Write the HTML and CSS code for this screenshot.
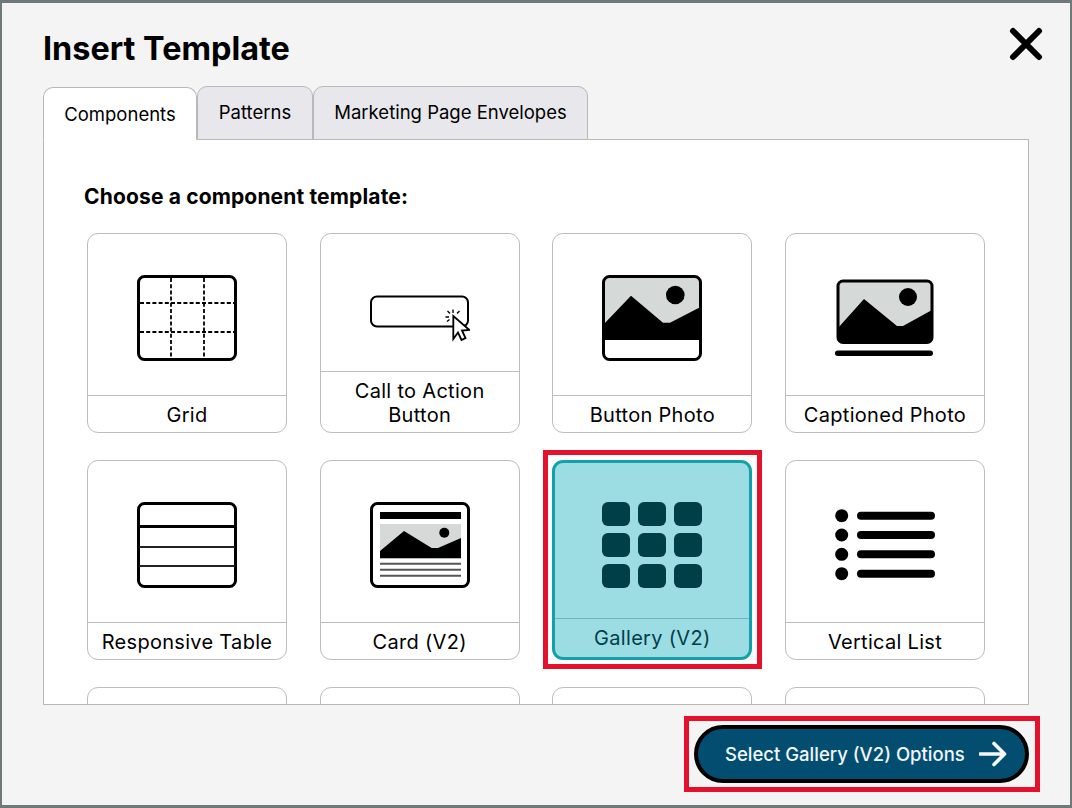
FILE: index.html
```html
<!DOCTYPE html>
<html lang="en">
<head>
<meta charset="utf-8">
<title>Insert Template</title>
<link rel="stylesheet" href="styles.css">
</head>
<body>
<div class="window">
  <header class="head">
    <h1 class="title">Insert Template</h1>
    <button class="close" aria-label="Close">
      <svg width="34" height="34" viewBox="0 0 34 34"><path d="M4 4 30 30M30 4 4 30" class="close-x"/></svg>
    </button>
  </header>
  <nav class="tabs">
    <div class="tab tab-active">Components</div>
    <div class="tab">Patterns</div>
    <div class="tab">Marketing Page Envelopes</div>
  </nav>
  <main class="panel">
    <h2 class="prompt">Choose a component template:</h2>
    <div class="grid">
      <div class="card">
        <svg class="icon" viewBox="0 0 100 86">
          <rect class="frame" x="1.5" y="1.5" width="97" height="83" rx="6"/>
          <path class="dash" d="M34 3V83M67 3V83M3 28H97M3 57H97"/>
        </svg>
        <div class="cap">Grid</div>
      </div>
      <div class="card">
        <svg class="icon" viewBox="0 0 100 86">
          <rect class="thin" x="1" y="21.5" width="97" height="30" rx="6"/>
          <path class="cursor" d="M83.3 41 83.3 64 88 57.5 91.5 65 95.5 63 92 55.5 99.5 55Z"/>
          <path class="rays" d="M83 38V34.5M80 38.5 77.5 36M79 42H75.5M87 38.5 89.5 36M79.5 44.5 77 46.5"/>
        </svg>
        <div class="cap">Call to Action Button</div>
      </div>
      <div class="card">
        <svg class="icon" viewBox="0 0 100 86">
          <rect class="sky" x="2" y="2" width="96" height="63"/>
          <path d="M1 50 29 20.7 61 47.7H68L99 31.7V65H1Z"/>
          <circle cx="73.3" cy="20" r="9.3"/>
          <rect class="frame" x="1.5" y="1.5" width="97" height="83" rx="6"/>
        </svg>
        <div class="cap">Button Photo</div>
      </div>
      <div class="card">
        <svg class="icon" viewBox="0 0 100 86">
          <rect class="sky" x="3" y="6" width="94" height="61" rx="5"/>
          <path d="M3 53 29 24 62 51H68L97 35V62Q97 67 92 67H8Q3 67 3 62Z"/>
          <circle cx="73" cy="22" r="9"/>
          <rect class="frame" x="3" y="6" width="94" height="61.5" rx="5"/>
          <rect x="0" y="75.5" width="98" height="5.5" rx="2.7"/>
        </svg>
        <div class="cap">Captioned Photo</div>
      </div>
      <div class="card">
        <svg class="icon" viewBox="0 0 100 86">
          <rect class="frame" x="1.5" y="1.5" width="97" height="83" rx="6"/>
          <path class="row-thick" d="M2 24.5H98"/>
          <path class="row-thin" d="M2 45H98M2 64H98"/>
        </svg>
        <div class="cap">Responsive Table</div>
      </div>
      <div class="card">
        <svg class="icon" viewBox="0 0 100 86">
          <rect class="frame" x="1.5" y="1.5" width="97" height="83" rx="6"/>
          <rect x="10" y="10" width="81" height="7"/>
          <rect class="sky" x="10" y="22" width="81" height="34.3"/>
          <path d="M10 49 34 29 61.7 46H68L91 36V56.3H10Z"/>
          <circle cx="74.3" cy="30.7" r="5"/>
          <path class="text-lines" d="M10 61.7H91M10 67.7H91M10 73.7H91"/>
        </svg>
        <div class="cap">Card (V2)</div>
      </div>
      <div class="card card-selected">
        <svg class="icon" viewBox="0 0 100 86">
          <rect class="tile" x="0" y="0" width="28" height="24" rx="6"/>
          <rect class="tile" x="36" y="0" width="28" height="24" rx="6"/>
          <rect class="tile" x="72" y="0" width="28" height="24" rx="6"/>
          <rect class="tile" x="0" y="31" width="28" height="24" rx="6"/>
          <rect class="tile" x="36" y="31" width="28" height="24" rx="6"/>
          <rect class="tile" x="72" y="31" width="28" height="24" rx="6"/>
          <rect class="tile" x="0" y="62" width="28" height="24" rx="6"/>
          <rect class="tile" x="36" y="62" width="28" height="24" rx="6"/>
          <rect class="tile" x="72" y="62" width="28" height="24" rx="6"/>
        </svg>
        <div class="cap">Gallery (V2)</div>
      </div>
      <div class="card">
        <svg class="icon" viewBox="0 0 100 86">
          <circle cx="6.7" cy="13.7" r="6.5"/>
          <circle cx="6.7" cy="33" r="6.5"/>
          <circle cx="6.7" cy="52.3" r="6.5"/>
          <circle cx="6.7" cy="71.7" r="6.5"/>
          <rect x="22" y="9.7" width="78" height="8" rx="4"/>
          <rect x="22" y="29" width="78" height="8" rx="4"/>
          <rect x="22" y="48.3" width="78" height="8" rx="4"/>
          <rect x="22" y="67.7" width="78" height="8" rx="4"/>
        </svg>
        <div class="cap">Vertical List</div>
      </div>
      <div class="card"></div>
      <div class="card"></div>
      <div class="card"></div>
      <div class="card"></div>
    </div>
  </main>
  <footer class="foot">
    <button class="next">
      <span>Select Gallery (V2) Options</span>
      <svg class="arrow" width="28" height="26" viewBox="0 0 28 26"><path d="M1 13H25M15 2.5 25.5 13 15 23.5"/></svg>
    </button>
  </footer>
</div>
</body>
</html>
```

FILE: styles.css
```css
* { box-sizing: border-box; }
html, body { margin: 0; padding: 0; }
body { font-family: Inter, "Liberation Sans", sans-serif; color: #000; overflow: hidden; }

.window {
  width: 1072px;
  height: 808px;
  background: #f4f4f5;
  border-style: solid;
  border-color: #6e7a7a;
  border-width: 3px 2px 3px 2px;
  padding: 0 41px;
  display: flex;
  flex-direction: column;
}

.head {
  height: 83px;
  display: flex;
  justify-content: space-between;
  align-items: flex-start;
}
.title {
  margin: 25px 0 0;
  font-size: 32.4px;
  line-height: 42px;
  font-weight: 700;
}
.close {
  margin: 24px -14px 0 0;
  padding: 0;
  width: 34px;
  height: 34px;
  border: 0;
  background: none;
}
.close-x { stroke: #000; stroke-width: 6px; stroke-linecap: round; fill: none; }

.tabs { display: flex; height: 54px; align-items: flex-end; position: relative; z-index: 1; margin-bottom: -1px; }
.tab {
  height: 54px;
  border: 1px solid #b8b8b8;
  border-radius: 10px 10px 0 0;
  background: #e8e8ec;
  font-size: 18.5px;
  line-height: 50px;
  text-align: center;
  width: 116px;
}
.tab:last-child { width: 275px; }
.tab-active {
  width: 154px;
  height: 53px;
  background: #fff;
  border-bottom-color: #fff;
  line-height: 52px;
}

.panel {
  height: 566px;
  background: #fff;
  border: 1px solid #b8b8b8;
  padding: 42px 43px 0 40px;
  overflow: hidden;
}
.prompt {
  margin: 0 0 21px;
  font-size: 21px;
  line-height: 30px;
  font-weight: 700;
  letter-spacing: 0.15px;
}
.grid {
  margin-left: 3px;
  display: grid;
  grid-template-columns: repeat(4, 200px);
  grid-auto-rows: 200px;
  column-gap: 32.67px;
  row-gap: 27px;
}
.card {
  position: relative;
  background: #fff;
  border: 1px solid #bdbdbd;
  border-radius: 11px;
  display: flex;
  flex-direction: column;
  align-items: center;
  padding-top: 41px;
}
.icon { width: 100px; height: 86px; display: block; flex: none; fill: #000; }
.cap {
  margin-top: auto;
  align-self: stretch;
  border-top: 1px solid #bdbdbd;
  padding: 7px 8px 5px;
  font-size: 20px;
  line-height: 24px;
  letter-spacing: 0.3px;
  text-align: center;
}

.frame { fill: none; stroke: #000; stroke-width: 3px; }
.thin { fill: none; stroke: #000; stroke-width: 2px; }
.dash { fill: none; stroke: #000; stroke-width: 1.8px; stroke-dasharray: 4 2.2; }
.sky { fill: #d5d9d8; }
.cursor { fill: #fff; stroke: #000; stroke-width: 1.8px; stroke-linejoin: miter; }
.rays { fill: none; stroke: #000; stroke-width: 1.4px; }
.row-thick { stroke: #000; stroke-width: 3px; fill: none; }
.row-thin { stroke: #222; stroke-width: 2px; fill: none; }
.text-lines { stroke: #555; stroke-width: 2px; fill: none; }
.tile { fill: #003f47; }

.card-selected {
  background: #9cdce3;
  border: 3px solid #13a0ad;
  padding-top: 39px;
  color: #003f4a;
}
.card-selected .cap { border-top-color: #6fb6bf; padding-bottom: 7px; }
.card-selected::after {
  content: "";
  position: absolute;
  top: -13px;
  left: -12px;
  right: -13px;
  bottom: -12px;
  border: 5px solid #e4102c;
  pointer-events: none;
}

.foot { display: flex; justify-content: flex-end; padding-top: 20px; }
.next {
  position: relative;
  width: 335px;
  height: 58px;
  background: #034e70;
  border: 4px solid #000;
  border-radius: 29px;
  color: #f0f6f8;
  font-family: inherit;
  font-size: 18.5px;
  font-weight: 500;
  padding: 0 18px 0 27px;
  display: flex;
  align-items: center;
  justify-content: space-between;
}
.next::after {
  content: "";
  position: absolute;
  top: -13px;
  left: -14px;
  right: -15px;
  bottom: -13px;
  border: 5px solid #e4102c;
  pointer-events: none;
}
.arrow { flex: none; }
.arrow path { fill: none; stroke: #f4f8fa; stroke-width: 3.6px; stroke-linecap: round; stroke-linejoin: round; }
```
